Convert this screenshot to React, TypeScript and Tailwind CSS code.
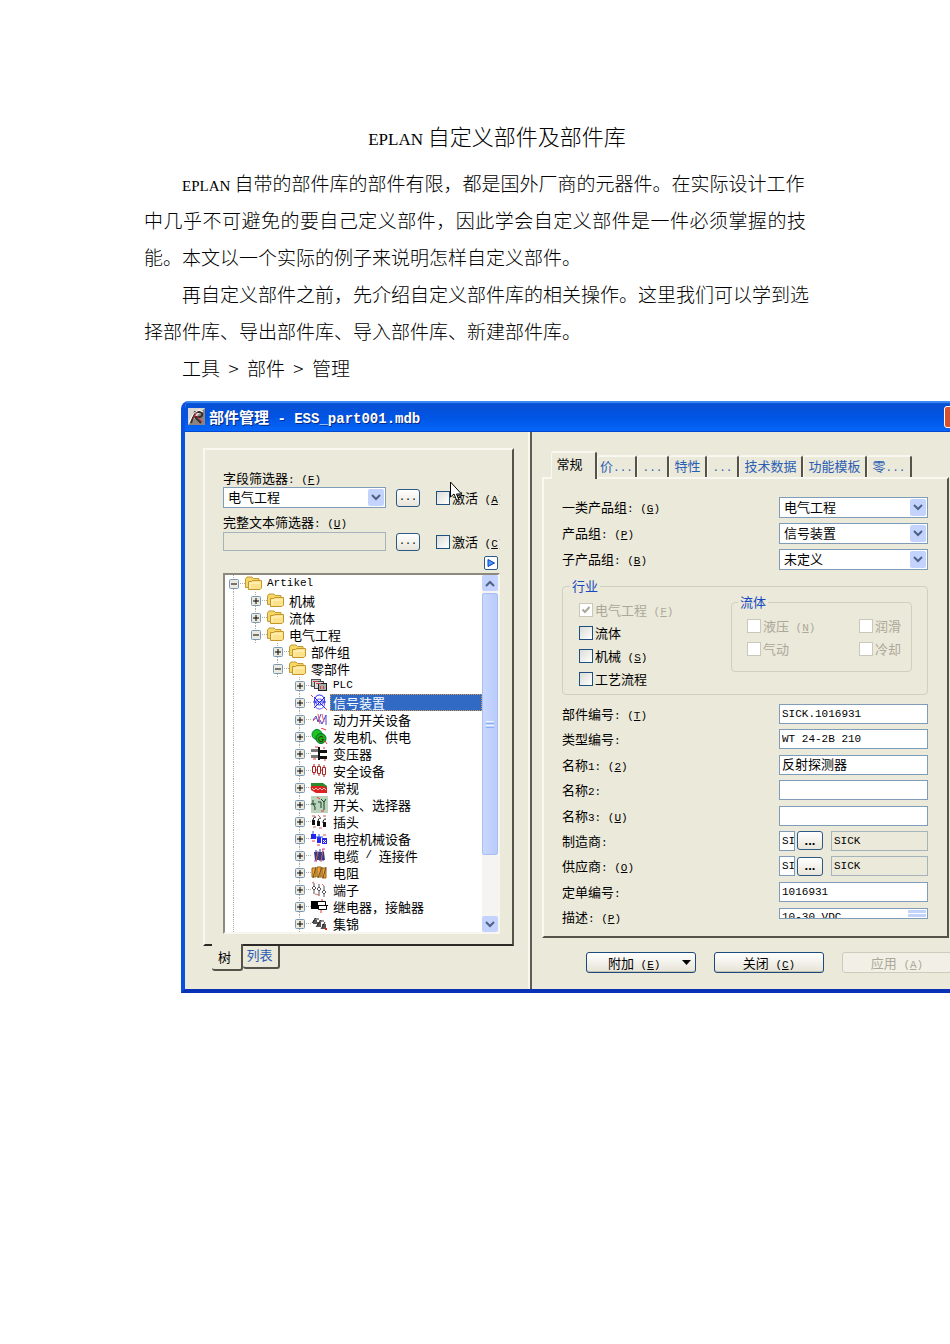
import { useState } from 'react';
import type { ReactNode } from 'react';

interface TreeRow {
  label: string;
  level: number;
  open?: boolean;
  guides: boolean[];
  icon: string;
}

const treeRows: TreeRow[] = [
  { label: 'Artikel', level: 0, open: true, guides: [], icon: 'folder' },
  { label: '机械', level: 1, guides: [true], icon: 'folder' },
  { label: '流体', level: 1, guides: [true], icon: 'folder' },
  { label: '电气工程', level: 1, open: true, guides: [true], icon: 'folder' },
  { label: '部件组', level: 2, guides: [true, false], icon: 'folder' },
  { label: '零部件', level: 2, open: true, guides: [true, false], icon: 'folder' },
  { label: 'PLC', level: 3, guides: [true, false, false], icon: 'plc' },
  { label: '信号装置', level: 3, guides: [true, false, false], icon: 'signal' },
  { label: '动力开关设备', level: 3, guides: [true, false, false], icon: 'power' },
  { label: '发电机、供电', level: 3, guides: [true, false, false], icon: 'generator' },
  { label: '变压器', level: 3, guides: [true, false, false], icon: 'transformer' },
  { label: '安全设备', level: 3, guides: [true, false, false], icon: 'safety' },
  { label: '常规', level: 3, guides: [true, false, false], icon: 'general' },
  { label: '开关、选择器', level: 3, guides: [true, false, false], icon: 'switch' },
  { label: '插头', level: 3, guides: [true, false, false], icon: 'plug' },
  { label: '电控机械设备', level: 3, guides: [true, false, false], icon: 'mech' },
  { label: '电缆 / 连接件', level: 3, guides: [true, false, false], icon: 'cable' },
  { label: '电阻', level: 3, guides: [true, false, false], icon: 'resistor' },
  { label: '端子', level: 3, guides: [true, false, false], icon: 'terminal' },
  { label: '继电器，接触器', level: 3, guides: [true, false, false], icon: 'relay' },
  { label: '集锦', level: 3, guides: [true, false, false], icon: 'misc' },
];

const icons: Record<string, ReactNode> = {
  folder: (
    <>
      <path d="M.5 12.500V4L2 2h5l1.500 1.500H14V12z" fill="#f6d765" stroke="#c39a35" />
      <path d="M3.500 14.500V6.500h3L8 5.500h8.500v7.500l-1.500 1.500z" fill="#fce28a" stroke="#c4952b" />
      <path d="M5 8h10M5 8v5" stroke="#fff7cf" />
    </>
  ),
  plc: (
    <>
      <rect x="0.500" y="2.500" width="9" height="7" fill="#ccc" stroke="#555" />
      <rect x="3.500" y="4.500" width="9" height="7" fill="#ddd" stroke="#444" />
      <rect x="7.500" y="6.500" width="8" height="7" fill="#aaa" stroke="#222" />
      <path d="M2 4.500h5M5 6.500h5M9.500 9v3M12.500 9v3" stroke="#c44" />
    </>
  ),
  signal: (
    <>
      <circle cx="8.500" cy="6" r="5" fill="none" stroke="#22f" />
      <circle cx="8.500" cy="10" r="5" fill="none" stroke="#55f" />
      <path d="M3 3l11 11M14 3 3 14M2 8h13" stroke="#22e" />
      <path d="M0 1l2 2M14 14l2 2" stroke="#e33" />
    </>
  ),
  power: (
    <>
      <path d="M2 9 5 5l2 6 3-8M9 9l2 4 4-9v10" fill="none" stroke="#44d" />
      <path d="M2 10 5 7M7 3l2 10M11 3l2 8" stroke="#e55" />
    </>
  ),
  generator: (
    <>
      <circle cx="6" cy="6.500" r="5" fill="#1fc41f" stroke="#084" />
      <circle cx="10" cy="10.500" r="5" fill="#17b317" stroke="#063" />
      <path d="M12 9.500a2.500 2.500 0 1 0 .5 2H10.500" fill="none" stroke="#420" />
      <path d="M10 0l5 2M14 13l2 3" stroke="#e33" />
    </>
  ),
  transformer: (
    <>
      <path d="M0 4h8v3H0zM0 10h8v3H0z" fill="#777" />
      <path d="M8 5h8v3H8zM8 11h8v3H8z" fill="#111" />
      <path d="M8 2v13" stroke="#111" strokeWidth="2" />
      <path d="M4 2h3M13 2v2M2 14h3M14 14v2" stroke="#e33" />
    </>
  ),
  safety: (
    <>
      <path d="M1.500 4.500h3v6h-3zM6.500 4.500h3v7h-3zM11.500 5.500h3v7h-3z" fill="#fff" stroke="#a22" />
      <path d="M3 2v3M3 10v3M8 2v3M8 11v3M13 3v3M13 12v3M4 8h3M9 8h3" stroke="#a22" />
    </>
  ),
  general: (
    <>
      <path d="M0 4h12l4 3v3H0z" fill="#298a2b" />
      <path d="M0 7h13l3 2v5H5L0 11z" fill="#d22" />
      <path d="M1 9l2 2 2-2 2 2 2-2 2 2 2-2 2 2" fill="none" stroke="#fbb" />
    </>
  ),
  switch: (
    <>
      <rect width="17" height="17" fill="#bcd3bd" />
      <path d="M2 4v4l2 3v3M7 6h3v6M10 3l3 3 2-3M13 6v8M0 8h5" fill="none" stroke="#142" />
      <path d="M6 1l3 2M10 15h3" stroke="#e33" />
    </>
  ),
  plug: (
    <>
      <path d="M2 8c0-3 1-4 3-4M7 9c0-3 1-4 3-4M12 10c0-3 1-4 3-4" fill="none" stroke="#111" />
      <path d="M1 7h3v5H1zM6 8h3v5H6zM12 9h3v5h-3z" fill="#111" />
      <path d="M1 3h3M7 2l2 2M12 3h3M2 14h3M8 15h3" stroke="#d55" />
    </>
  ),
  mech: (
    <>
      <path d="M0 4h5v5H0zM6 7h4v6H6zM11 8h5v6h-5z" fill="#2525ee" />
      <path d="M2 1v3M8 4v3M5 7h7" stroke="#25e" />
      <path d="M12 10l3 3M15 10l-3 3" stroke="#fff" />
      <path d="M1 11h3M6 15h3M12 5h3" stroke="#e44" />
    </>
  ),
  cable: (
    <>
      <path d="M3 5h10l1 8H4z" fill="#446" />
      <path d="M5 3v11M9 2v12M12 4v10" stroke="#22d" />
      <path d="M7 4 5 14M12 2l-2 13" stroke="#c63" />
      <path d="M3 14h3M11 2h3" stroke="#e3a" />
    </>
  ),
  resistor: (
    <>
      <path d="M1 4h4v9H1zM6 3h4v10H6zM11 4h4v10h-4z" fill="#f0a030" stroke="#9a6414" />
      <path d="M2 14 5 3M7 14l4-11M12 14l3-11" stroke="#653" />
    </>
  ),
  terminal: (
    <>
      <path d="M3 2v11M8 3v12M13 5v11" stroke="#555" fill="none" />
      <path d="M3 5l2 2-2 2-2-2zM8 6l2 2-2 2-2-2zM13 9l2 2-2 2-2-2z" fill="#fff" stroke="#555" />
      <path d="M1 2l2-1M4 13l4 1M11 3l2 2" stroke="#e66" />
    </>
  ),
  relay: (
    <>
      <path d="M0 3h7v8H0z" fill="#000" />
      <path d="M6.500 3.500h8v4h-8zM7.500 7.500h8v4h-8z" fill="#fff" stroke="#000" />
      <path d="M0 7.500h17" stroke="#000" />
      <path d="M11 1v2M10 12v3" stroke="#e33" />
    </>
  ),
  misc: (
    <>
      <path d="M2 5h4v4H2zM6 7h4v5H6zM11 9h4v5h-4z" fill="#555" />
      <path d="M1 8 5 3M5 12l5-7M10 14l4-7M3 4h5M8 6h5" stroke="#222" />
      <path d="M14 14h2" stroke="#e22" strokeWidth="2" />
    </>
  ),
};

const tabs = ['常规', '价...', '...', '特性', '...', '技术数据', '功能模板', '零...'];
const tabWidths = ['w-[46px]', 'w-[40px]', 'w-[32px]', 'w-[38px]', 'w-[32px]', 'w-[64px]', 'w-[64px]', 'w-[45px]'];

// Latin runs are set in the narrower monospaced face
function Mixed({ text, hotkey }: { text: string; hotkey?: string }) {
  return (
    <>
      {text.split(/([\x20-\x7e]+)/).map((part, i) =>
        i % 2 ? (
          <span key={i} className="font-['Liberation_Mono',monospace] text-[11px] leading-none whitespace-pre">
            {part}
          </span>
        ) : (
          part
        )
      )}
      {hotkey && (
        <span className="font-['Liberation_Mono',monospace] text-[11px] leading-none whitespace-pre">
          {' ('}
          <u>{hotkey}</u>)
        </span>
      )}
    </>
  );
}

function Select({ id, value }: { id: string; value: string }) {
  return (
    <div className="relative h-[21px] w-full">
      <select
        id={id}
        defaultValue={value}
        className="block h-full w-full appearance-none border border-[#7f9db9] bg-white pb-[2px] pl-1 text-[13px] leading-[17px]"
      >
        <option>{value}</option>
      </select>
      <span className="pointer-events-none absolute top-[2px] right-[2px] flex h-[17px] w-4 items-center justify-center rounded-xs bg-[#c3d3fd]">
        <svg width="10" height="7" viewBox="0 0 10 7">
          <path d="M1 1l4 4 4-4" fill="none" stroke="#4d6185" strokeWidth="2" />
        </svg>
      </span>
    </div>
  );
}

function DotsButton({ label }: { label: string }) {
  return (
    <button
      aria-label={label}
      className="h-[18px] w-6 shrink-0 rounded-[3px] border border-[#2c5a86] bg-linear-to-b from-white to-[#e8e5da] text-center font-['Liberation_Mono',monospace] text-[10px] leading-4"
    >
      ...
    </button>
  );
}

function Check({ label, hotkey, disabled, checked }: { label: string; hotkey?: string; disabled?: boolean; checked?: boolean }) {
  return (
    <label className={`flex h-[18px] items-center gap-[2px] leading-[18px] whitespace-nowrap ${disabled ? 'text-[#aca899]' : ''}`}>
      <span className="relative flex size-[14px] shrink-0">
        <input
          type="checkbox"
          defaultChecked={checked}
          disabled={disabled}
          className="peer size-[14px] appearance-none border border-[#1c5180] bg-linear-to-br from-[#dcdcd7] to-white disabled:border-[#cac8bb] disabled:bg-white disabled:bg-none"
        />
        <svg viewBox="0 0 14 14" className="pointer-events-none absolute inset-0 hidden size-[14px] peer-checked:block">
          <path d="M3.500 6.500 6 9l4.500-5" fill="none" stroke="#aca899" strokeWidth="2" />
        </svg>
      </span>
      <span>
        <Mixed text={label} hotkey={hotkey} />
      </span>
    </label>
  );
}

function Row({ id, label, hotkey, children }: { id: string; label: string; hotkey?: string; children: ReactNode }) {
  return (
    <div className="flex h-5 items-center justify-between leading-5">
      <label htmlFor={id}>
        <Mixed text={label} hotkey={hotkey} />
      </label>
      <div className="flex w-[149px] shrink-0 items-center">{children}</div>
    </div>
  );
}

const fieldClass =
  "h-5 w-full min-w-0 border border-[#7f9db9] bg-white px-[2px] font-['Liberation_Mono','Noto_Sans_CJK_SC',monospace] text-[11px]";

function Supplier({ id, name }: { id: string; name: string }) {
  return (
    <>
      <input id={id} defaultValue={name} className="h-5 w-4 border border-[#7f9db9] bg-white pl-[2px] font-['Liberation_Mono',monospace] text-[11px]" />
      <button
        aria-label="选择"
        className="mr-2 ml-[2px] h-[19px] w-[26px] shrink-0 rounded-[3px] border border-[#2c5a86] bg-linear-to-b from-white to-[#e8e5da] text-center font-['Liberation_Sans',sans-serif] text-[13px] leading-4 font-bold"
      >
        ...
      </button>
      <input aria-label="名称" readOnly value={name} className="h-5 w-full min-w-0 border border-[#a5b3bb] bg-[#ebe9d9] pl-[2px] font-['Liberation_Mono',monospace] text-[11px]" />
    </>
  );
}

function Tree() {
  const [selected, setSelected] = useState('信号装置');

  return (
    <div className="mt-[3px] flex border-2 border-t-[#8d897c] border-r-[#f7f6ef] border-b-[#f7f6ef] border-l-[#8d897c] bg-white">
      <ul className="min-w-0 flex-1">
        {treeRows.map((row) => (
          <li key={row.label + row.level} className="flex h-[17px] items-center leading-[17px]">
            {row.guides.map((line, i) => (
              <span key={i} className="h-full w-[22px] shrink-0 pl-2">
                {line && <span className="block h-full w-px border-l border-dotted border-[#b0aea2]" />}
              </span>
            ))}
            <span className="relative h-full w-5 shrink-0">
              <span className="absolute top-0 left-2 h-full border-l border-dotted border-[#b0aea2]" />
              <span className="absolute top-2 left-2 w-3 border-t border-dotted border-[#b0aea2]" />
              <svg viewBox="0 0 10 10" className="absolute top-1 left-1 size-[10px]">
                <rect x="0.500" y="0.500" width="9" height="9" rx="1" fill="#eceade" stroke="#7898b5" />
                <path d={row.open ? 'M2 5h6' : 'M2 5h6M5 2v6'} stroke="#000" />
              </svg>
            </span>
            <svg viewBox="0 0 17 17" className="mr-[2px] size-[17px] shrink-0">
              {icons[row.icon]}
            </svg>
            <button
              onClick={() => setSelected(row.label)}
              className={`flex h-[17px] min-w-0 flex-1 items-center border border-dotted pl-[2px] leading-[15px] whitespace-pre ${
                selected === row.label ? 'border-[#d69a4a] bg-[#316ac5] text-white' : 'border-transparent'
              }`}
            >
              <Mixed text={row.label} />
            </button>
          </li>
        ))}
      </ul>
      <div className="flex w-4 shrink-0 flex-col bg-[#f5f4f0]">
        <button aria-label="向上" className="flex h-4 items-center justify-center rounded-xs bg-[#c3d3fd]">
          <svg width="10" height="7" viewBox="0 0 10 7">
            <path d="M1 6l4-4 4 4" fill="none" stroke="#4d6185" strokeWidth="2" />
          </svg>
        </button>
        <div className="mt-[2px] flex h-[262px] flex-col items-center justify-center gap-px rounded-xs border border-[#a9bff2] bg-linear-to-r from-[#c9d8ff] to-[#b9cbfb]">
          <span className="h-px w-2 bg-[#eef4fe]" />
          <span className="h-px w-2 bg-[#8cb0f8]" />
          <span className="h-px w-2 bg-[#eef4fe]" />
          <span className="h-px w-2 bg-[#8cb0f8]" />
        </div>
        <button aria-label="向下" className="mt-auto flex h-4 items-center justify-center rounded-xs bg-[#c3d3fd]">
          <svg width="10" height="7" viewBox="0 0 10 7">
            <path d="M1 1l4 4 4-4" fill="none" stroke="#4d6185" strokeWidth="2" />
          </svg>
        </button>
      </div>
    </div>
  );
}

function FilterPanel() {
  return (
    <aside className="w-[347px] shrink-0 border-r-2 border-[#5f5d54] pl-[18px]">
      <div className="h-full border-r-2 border-[#f8f7f0] pt-4 pr-[14px] pb-[18px]">
        <div className="border-2 border-t-[#f8f7f0] border-r-[#55524a] border-b-[#2c2a26] border-l-[#f8f7f0] pt-[19px] pr-3 pb-[10px] pl-[18px]">
          <label htmlFor="field-filter" className="block h-[18px] leading-[18px]">
            <Mixed text="字段筛选器:" hotkey="F" />
          </label>
          <div className="relative">
            <div className="flex h-[21px] items-center overflow-hidden">
              <div className="mr-[10px] w-[163px] shrink-0">
                <Select id="field-filter" value="电气工程" />
              </div>
              <DotsButton label="选择字段筛选器" />
              <div className="ml-4">
                <Check label="激活" hotkey="A" />
              </div>
            </div>
            <svg viewBox="0 0 13 22" className="absolute -top-[6px] left-[227px] h-[22px] w-[13px]">
              <path d="M.5 1v15l3.500-3 2.500 6h2.500l-2.500-6h5z" fill="#fff" stroke="#000" />
            </svg>
          </div>
          <label htmlFor="text-filter" className="mt-[5px] block h-[18px] leading-[18px]">
            <Mixed text="完整文本筛选器:" hotkey="U" />
          </label>
          <div className="flex h-[21px] items-center overflow-hidden">
            <input id="text-filter" readOnly className="mr-[10px] h-[19px] w-[163px] shrink-0 border border-[#a5b3bb] bg-[#ebe9d9]" />
            <DotsButton label="选择文本筛选器" />
            <div className="ml-4">
              <Check label="激活" hotkey="C" />
            </div>
          </div>
          <div className="mt-1 flex justify-end">
            <button aria-label="展开" className="mr-[2px] flex h-[14px] w-[14px] items-center justify-center rounded-[2px] border border-[#2c5a86] bg-white">
              <svg width="8" height="8" viewBox="0 0 8 8">
                <path d="M1 0.500v7L7.500 4z" fill="#4c9bff" stroke="#0a3bc0" />
              </svg>
            </button>
          </div>
          <Tree />
        </div>
        <div className="ml-[9px] flex items-start">
          <button className="-mt-[2px] h-[27px] w-[31px] rounded-b-[3px] border-r-2 border-b-2 border-[#55524a] bg-[#ebe9d9] pr-1 leading-[23px]">
            树
          </button>
          <button className="h-[23px] w-[37px] rounded-b-[3px] border-r-2 border-b-2 border-[#55524a] pr-[2px] pb-1 leading-4 text-[#2a5db5]">
            列表
          </button>
        </div>
      </div>
    </aside>
  );
}

function DetailPanel() {
  return (
    <main className="flex min-w-0 flex-1 flex-col pt-[19px] pl-[10px]">
      <div role="tablist" className="flex h-[26px] items-end pl-[9px]">
        {tabs.map((tab, i) => (
          <button
            key={i}
            role="tab"
            aria-selected={i === 0}
            className={`shrink-0 rounded-t-[3px] border-t-2 border-r-2 border-l border-t-[#f8f7f0] border-r-[#55524a] border-l-[#f8f7f0] whitespace-nowrap ${tabWidths[i]} ${
              i === 0 ? 'z-10 -mb-[2px] h-7 bg-[#ebe9d9] pr-2 pb-1 leading-5' : 'h-[22px] pb-[2px] leading-[18px] text-[#2a5db5]'
            }`}
          >
            <Mixed text={tab} />
          </button>
        ))}
      </div>
      <div className="mr-px flex flex-1 flex-col border-2 border-t-[#f8f7f0] border-r-[#55524a] border-b-[#55524a] border-l-[#f8f7f0] pt-[18px] pr-[19px] pb-[9px] pl-[18px]">
        <div className="flex flex-col gap-[6px]">
          <Row id="group1" label="一类产品组:" hotkey="G">
            <Select id="group1" value="电气工程" />
          </Row>
          <Row id="group2" label="产品组:" hotkey="P">
            <Select id="group2" value="信号装置" />
          </Row>
          <Row id="group3" label="子产品组:" hotkey="B">
            <Select id="group3" value="未定义" />
          </Row>
        </div>

        <fieldset className="mt-2 rounded-sm border border-[#d0d0bf] pt-[6px] pb-[6px] pl-4">
          <legend className="-ml-[9px] px-[2px] leading-[18px] text-[#1548c0]">行业</legend>
          <div className="flex items-start justify-between">
            <div className="flex flex-col gap-[5px]">
              <Check label="电气工程" hotkey="F" disabled checked />
              <Check label="流体" />
              <Check label="机械" hotkey="S" />
              <Check label="工艺流程" />
            </div>
            <fieldset className="-mt-2 mr-[15px] w-[181px] rounded-sm border border-[#d0d0bf] pt-[6px] pb-[13px] pl-[15px]">
              <legend className="-ml-[9px] px-[2px] leading-[18px] text-[#1548c0]">流体</legend>
              <div className="grid grid-cols-[112px_1fr] gap-y-[5px]">
                <Check label="液压" hotkey="N" disabled />
                <Check label="润滑" disabled />
                <Check label="气动" disabled />
                <Check label="冷却" disabled />
              </div>
            </fieldset>
          </div>
        </fieldset>

        <div className="mt-[9px] flex flex-1 flex-col justify-between">
          <Row id="part-no" label="部件编号:" hotkey="T">
            <input id="part-no" defaultValue="SICK.1016931" className={fieldClass} />
          </Row>
          <Row id="type-no" label="类型编号:">
            <input id="type-no" defaultValue="WT 24-2B 210" className={fieldClass} />
          </Row>
          <Row id="name1" label="名称1:" hotkey="2">
            <input
              id="name1"
              defaultValue="反射探测器"
              className="h-5 w-full border border-[#7f9db9] bg-white px-[2px] pb-[2px] text-[13px] leading-4"
            />
          </Row>
          <Row id="name2" label="名称2:">
            <input id="name2" className={fieldClass} />
          </Row>
          <Row id="name3" label="名称3:" hotkey="U">
            <input id="name3" className={fieldClass} />
          </Row>
          <Row id="maker" label="制造商:">
            <Supplier id="maker" name="SICK" />
          </Row>
          <Row id="supplier" label="供应商:" hotkey="O">
            <Supplier id="supplier" name="SICK" />
          </Row>
          <Row id="order-no" label="定单编号:">
            <input id="order-no" defaultValue="1016931" className={fieldClass} />
          </Row>
          <Row id="desc" label="描述:" hotkey="P">
            <div className="mb-2 flex h-[11px] w-full overflow-hidden border border-[#7f9db9] bg-white">
              <textarea
                id="desc"
                defaultValue="10-30 VDC"
                className="h-[18px] min-w-0 flex-1 resize-none overflow-hidden pt-[2px] pl-[2px] font-['Liberation_Mono',monospace] text-[11px] leading-[13px]"
              />
              <span className="mt-px mr-px flex w-[18px] flex-col gap-px">
                <span className="h-[3px] bg-[#c3d3fd]" />
                <span className="h-[3px] bg-[#c3d3fd]" />
              </span>
            </div>
          </Row>
        </div>
      </div>
      <div className="flex gap-[18px] overflow-hidden pt-[14px] pb-4 pl-[44px]">
        <button className="flex h-[21px] w-[110px] shrink-0 items-center justify-between rounded-[3px] border border-[#1c4a7c] bg-linear-to-b from-white to-[#e6e3d6] pr-1 pl-[21px] shadow-[inset_0_-1px_0_#c5c1b2]">
          <span className="leading-[19px]">
            <Mixed text="附加" hotkey="E" />
          </span>
          <svg width="9" height="5" viewBox="0 0 9 5">
            <path d="M0 0h9L4.500 5z" />
          </svg>
        </button>
        <button className="h-[21px] w-[110px] shrink-0 rounded-[3px] border border-[#1c4a7c] bg-linear-to-b from-white to-[#e6e3d6] leading-[19px] shadow-[inset_0_-1px_0_#c5c1b2]">
          <Mixed text="关闭" hotkey="C" />
        </button>
        <button disabled className="h-[21px] w-[110px] shrink-0 rounded-[3px] border border-[#cdcbbb] bg-[#f2f0e6] leading-[19px] text-[#aca899]">
          <Mixed text="应用" hotkey="A" />
        </button>
      </div>
    </main>
  );
}

function PartsWindow() {
  return (
    <section className="mt-[15px] ml-[181px] overflow-hidden rounded-tl-lg border-b-4 border-l-4 border-b-[#0831b5] border-l-[#0a50e0] bg-[#ebe9d9] font-['Noto_Sans_CJK_SC',sans-serif] text-[13px] text-black">
      <header className="-ml-1 flex h-[31px] items-center bg-linear-to-b from-[#0a4fd0] via-[#0054e3] to-[#0667fb] pl-[7px] shadow-[inset_0_2px_1px_#3b8df5,inset_0_-1px_0_#0048d0]">
        <svg viewBox="0 0 17 17" className="size-[17px]">
          <rect width="17" height="17" fill="#d8d4d0" />
          <path d="M0 17 17 0v17z" fill="#8d8380" />
          <path d="M3 15 7 4h5c3 0 3 4 0 5H7l6 6" fill="none" stroke="#333" strokeWidth="2" />
          <path d="M5 11 9 4M9 8l5 6" stroke="#d22" />
          <path d="M1 14 6 5 11 2l4 2" fill="none" stroke="#fff" />
        </svg>
        <h2 className="ml-1 text-[15px] leading-[30px] font-bold text-white [text-shadow:1px_1px_0_#0a2a80]">
          部件管理
          <span className="font-['Liberation_Mono',monospace] text-[14px] leading-none whitespace-pre"> - ESS_part001.mdb</span>
        </h2>
        <button aria-label="关闭窗口" className="-mr-4 ml-auto size-[22px] shrink-0 rounded-[3px] border border-white bg-[#d9502f]" />
      </header>
      <div className="flex">
        <FilterPanel />
        <DetailPanel />
      </div>
    </section>
  );
}

export default function App() {
  return (
    <div className="min-h-screen overflow-hidden bg-white pt-[117px] font-['Noto_Sans_CJK_SC',sans-serif] text-black">
      <article className="mx-36 text-[19px] leading-[37px] font-light">
        <h1 className="mb-[10px] indent-11 text-center text-[22px] font-light">
          <span className="font-['Liberation_Serif',serif] text-[17px] leading-none">EPLAN</span> 自定义部件及部件库
        </h1>
        <p className="whitespace-nowrap">
          <span className="block indent-[38px]">
            <span className="font-['Liberation_Serif',serif] text-[15px] leading-none">EPLAN</span> 自带的部件库的部件有限，都是国外厂商的元器件。在实际设计工作
          </span>
          <span className="block text-justify [text-align-last:justify]">中几乎不可避免的要自己定义部件，因此学会自定义部件是一件必须掌握的技</span>
          <span className="block">能。本文以一个实际的例子来说明怎样自定义部件。</span>
        </p>
        <p className="whitespace-nowrap">
          <span className="block indent-[38px]">再自定义部件之前，先介绍自定义部件库的相关操作。这里我们可以学到选</span>
          <span className="block">择部件库、导出部件库、导入部件库、新建部件库。</span>
        </p>
        <p className="indent-[38px] whitespace-pre">工具  &gt;  部件  &gt;  管理</p>
      </article>
      <PartsWindow />
    </div>
  );
}
